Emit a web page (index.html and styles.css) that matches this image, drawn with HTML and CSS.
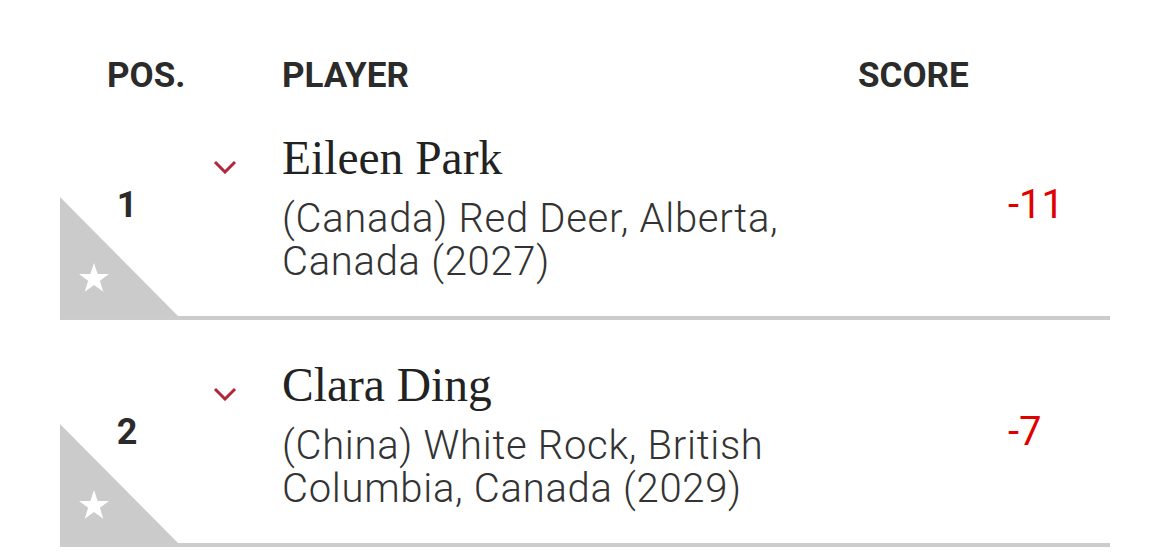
FILE: index.html
```html
<!DOCTYPE html>
<html lang="en">
<head>
<meta charset="utf-8">
<title>Leaderboard</title>
<link rel="stylesheet" href="styles.css">
</head>
<body>
<div class="board">
  <div class="header">
    <div class="h-pos">POS.</div>
    <div class="h-player">PLAYER</div>
    <div class="h-score">SCORE</div>
  </div>

  <div class="row">
    <div class="badge">
      <svg class="star" viewBox="0 0 24 23" width="32" height="30"><polygon points="12,0 14.8,8.4 23.5,8.4 16.5,13.6 19.1,22 12,16.9 4.9,22 7.5,13.6 0.5,8.4 9.2,8.4" fill="#fff"/></svg>
    </div>
    <div class="pos">1</div>
    <div class="chev"><svg viewBox="0 0 24 14" width="24" height="14"><polyline points="2,2 12,12 22,2" fill="none" stroke="#b3253a" stroke-width="3"/></svg></div>
    <div class="player">
      <div class="name">Eileen Park</div>
      <div class="info">(Canada) Red Deer, Alberta, Canada (2027)</div>
    </div>
    <div class="score">-11</div>
  </div>

  <div class="row">
    <div class="badge">
      <svg class="star" viewBox="0 0 24 23" width="32" height="30"><polygon points="12,0 14.8,8.4 23.5,8.4 16.5,13.6 19.1,22 12,16.9 4.9,22 7.5,13.6 0.5,8.4 9.2,8.4" fill="#fff"/></svg>
    </div>
    <div class="pos">2</div>
    <div class="chev"><svg viewBox="0 0 24 14" width="24" height="14"><polyline points="2,2 12,12 22,2" fill="none" stroke="#b3253a" stroke-width="3"/></svg></div>
    <div class="player">
      <div class="name">Clara Ding</div>
      <div class="info">(China) White Rock, British Columbia, Canada (2029)</div>
    </div>
    <div class="score">-7</div>
  </div>
</div>
</body>
</html>
```

FILE: styles.css
```css
html, body {
  margin: 0;
  padding: 0;
  background: #fff;
}

.board {
  margin-left: 60px;
  width: 1050px;
  font-family: Roboto, "Liberation Sans", sans-serif;
}

.header {
  display: flex;
  height: 93px;
  box-sizing: border-box;
  padding-top: 58px;
  line-height: 35px;
  font-size: 35px;
  font-weight: 700;
  color: #2b2b2b;
}

.h-pos {
  width: 175px;
  padding-left: 47px;
}

.h-player {
  width: 576px;
}

.row {
  position: relative;
  display: flex;
  align-items: center;
  height: 223px;
  border-bottom: 4px solid #cccccc;
}

.badge {
  position: absolute;
  left: 0;
  bottom: 0;
  width: 118px;
  height: 119px;
  background: #cbcbcb;
  clip-path: polygon(0 0, 100% 100%, 0 100%);
}

.star {
  position: absolute;
  left: 18px;
  bottom: 23px;
}

.pos {
  position: relative;
  width: 134px;
  text-align: center;
  font-size: 36px;
  font-weight: 700;
  color: #2b2b2b;
}

.chev {
  align-self: flex-start;
  width: 69px;
  padding-left: 19px;
  padding-top: 67px;
}

.chev svg {
  display: block;
}

.player {
  width: 560px;
  padding-top: 5px;
}

.name {
  font-family: "Liberation Serif", "Times New Roman", serif;
  font-size: 47.5px;
  line-height: 54px;
  color: #222;
}

.info {
  margin-top: 12px;
  font-size: 40px;
  font-weight: 300;
  letter-spacing: 0.7px;
  line-height: 43.5px;
  color: #333;
}

.score {
  margin-left: 166px;
  font-size: 40px;
  color: #e10000;
}
```
